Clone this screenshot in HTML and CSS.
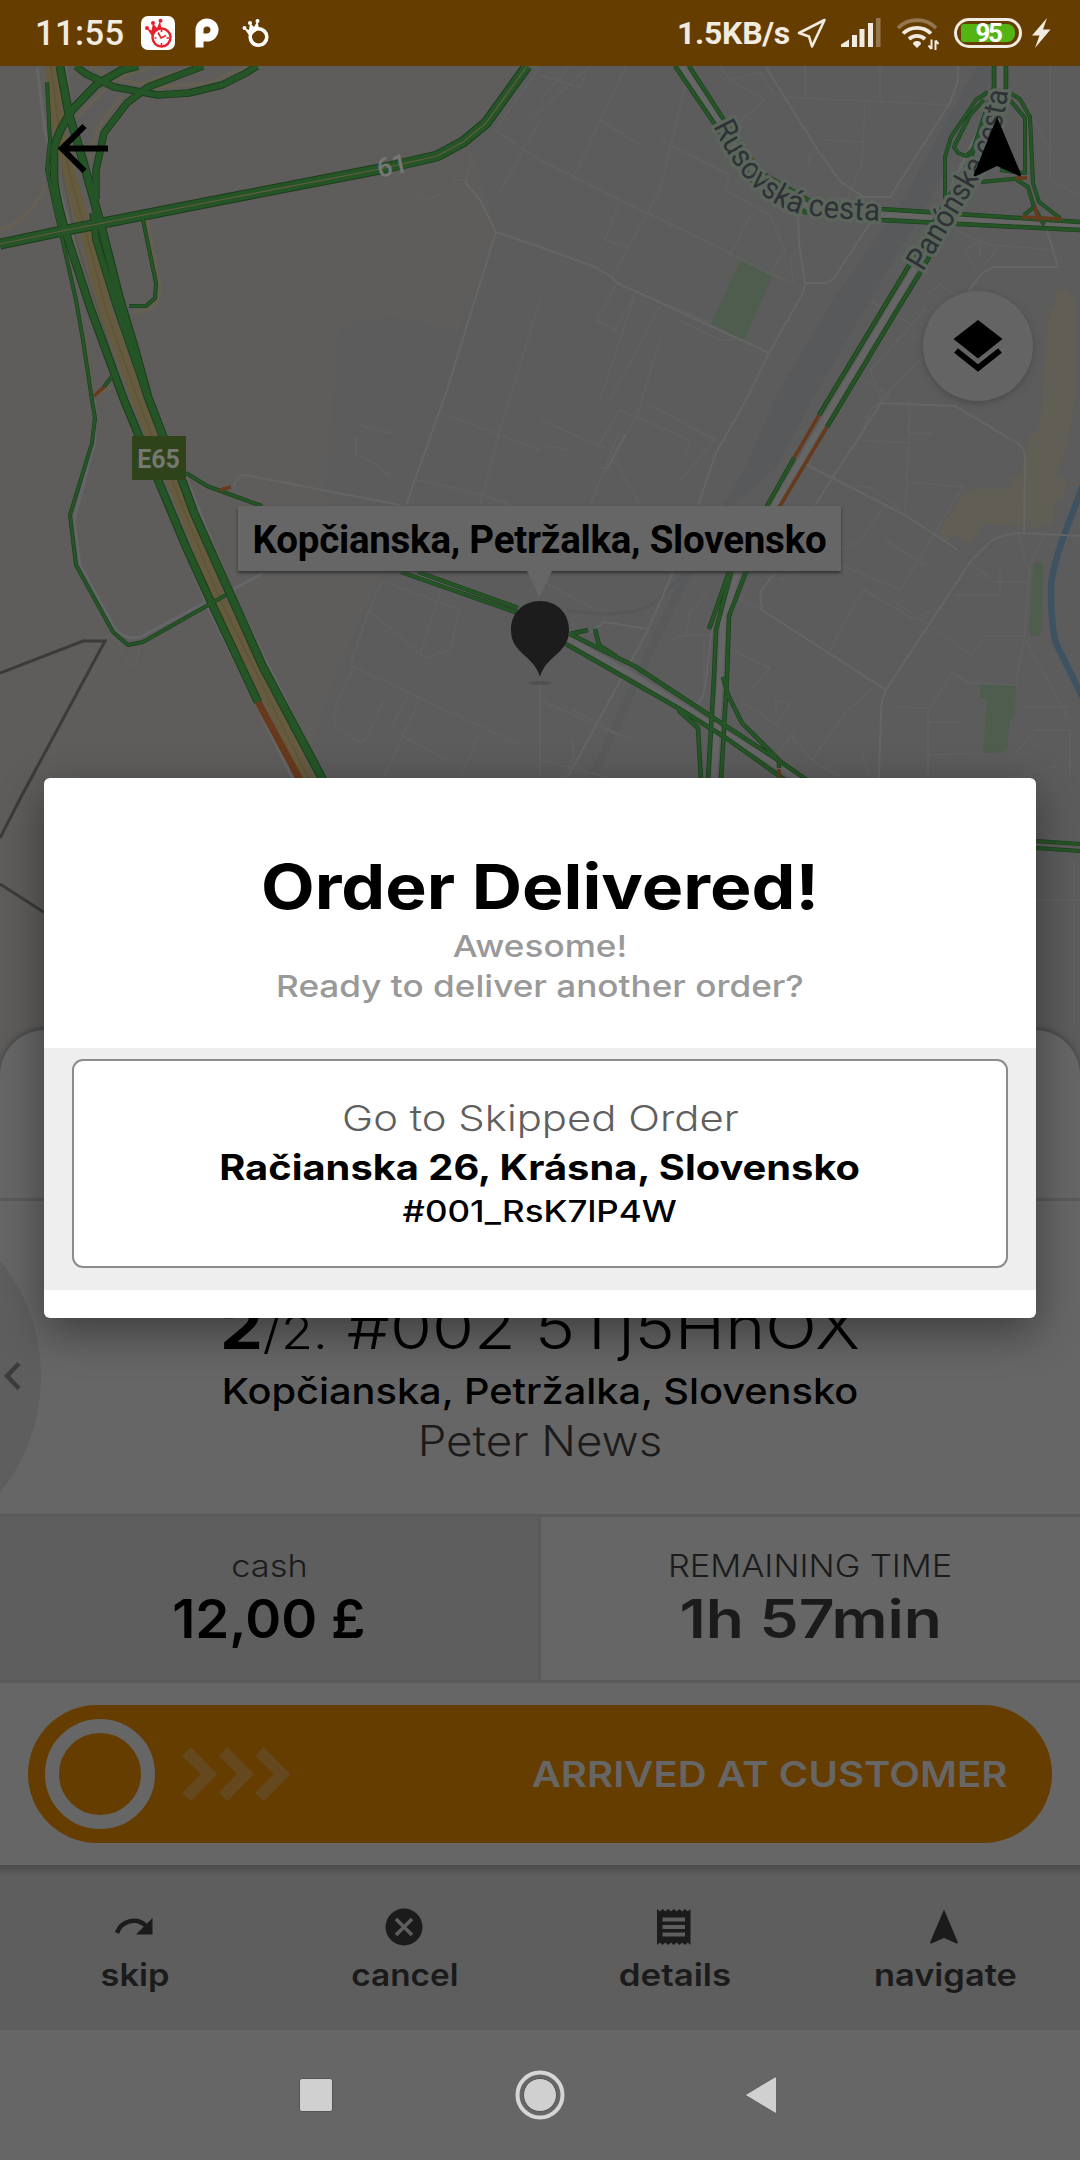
FILE: index.html
```html
<!DOCTYPE html>
<html lang="sk">
<head>
<meta charset="utf-8">
<title>Order Delivered</title>
<link rel="stylesheet" href="styles.css">
</head>
<body>
<div class="screen">
  <header class="status">
    <div class="status-left">
      <span class="clock">11:55</span>
      <svg class="app-icon" width="34" height="34" viewBox="0 0 34 34">
        <rect width="34" height="34" rx="7" fill="#fff"/>
        <g fill="#e8202c"><circle cx="6" cy="12" r="2"/><circle cx="12" cy="7" r="2"/><circle cx="19.500" cy="4.800" r="2"/><path d="M5.500 12l5 2.500 1.500-7 4 4.500 3-7 1.500 8-9.500 7z"/></g>
        <circle cx="20.500" cy="21.500" r="9" fill="#fff" stroke="#e8202c" stroke-width="2.400"/>
        <path d="M17 16.500l3 5.500 5-2.500M20.500 14v2M20.500 27v2.500M13.500 22h2M25.500 22h2.500" fill="none" stroke="#e8202c" stroke-width="1.600"/>
      </svg>
      <svg class="p-icon" width="24" height="30" viewBox="0 0 24 30"><path d="M4.500 29.500V12a7.500 7.500 0 1 1 7.500 7.500H8" fill="none" stroke="#fff" stroke-width="8"/></svg>
      <svg class="ring-icon" width="28" height="30" viewBox="0 0 28 30"><circle cx="16.500" cy="19" r="8.300" fill="none" stroke="#fff" stroke-width="3.600"/><g fill="#fff"><circle cx="2.500" cy="10" r="2"/><circle cx="8" cy="5" r="2"/><circle cx="15.500" cy="3" r="2"/><path d="M2 10l5 2L8 5l4 4 3.500-6 1.500 8-9.500 7z"/></g></svg>
    </div>
    <div class="status-right">
      <span class="speed">1.5KB/s</span>
      <svg class="loc" width="30" height="32" viewBox="0 0 30 32"><path d="M27.500 3L2 16l10 3.500 3 10z" fill="none" stroke="#f2ebe1" stroke-width="2.600" stroke-linejoin="round"/></svg>
      <svg class="signal" width="42" height="30" viewBox="0 0 42 30"><g fill="#f2ebe1"><path d="M1 29v-2.500l8-5V29z"/><rect x="12" y="17" width="5" height="12"/><rect x="19.500" y="11" width="5" height="18"/><rect x="28" y="5" width="5" height="24"/></g><rect x="36" width="4.500" height="29" fill="#94774d"/></svg>
      <svg class="wifi" width="44" height="36" viewBox="0 0 44 36"><g fill="none" stroke-width="3.800"><path d="M2 13a27 27 0 0 1 38 0" stroke="#94774d"/><path d="M7 18.500a20 20 0 0 1 28 0M13 24a12 12 0 0 1 16 0" stroke="#f2ebe1"/></g><path d="M17 29q0-3 4-3t4 3l-4 4z" fill="#f2ebe1"/><path d="M35.500 24.500v9.500m0 0l-3-3.500M39.500 35v-9.500m0 0l3 3.500" fill="none" stroke="#f2ebe1" stroke-width="2"/></svg>
      <span class="battery"><span class="level">95</span></span>
      <svg class="bolt" width="20" height="32" viewBox="0 0 20 32"><path d="M16 1L1 18.500h7.500L4 31 19.500 12.500H12z" fill="#f2ebe1"/></svg>
    </div>
  </header>

  <section class="map">
    <svg class="map-art" width="1080" height="1014" viewBox="0 66 1080 1014">
      <defs>
        <path id="rus" d="M713 126C731 164 757 202 797 213C825 219 850 219 900 222"/>
        <path id="pan" d="M923 272L959 212C974 187 986 168 995 146Q1006 118 1009 80"/>
      </defs>
      <rect y="66" width="1080" height="1014" fill="#5f5d5b"/>
      <path d="M525 66L470 140L497 232L458 333L390 316L340 327L325 493L382 572L339 667L300 778V1080H1080V66z" fill="#5c5c5c"/>
      <path d="M741 260L773 274L744 340L711 323zM980 684H1016L1015 713L1009 723L1008 747L1001 753H983L987 698H980zM1033 566Q1036 558 1043 564L1042 632Q1036 640 1029 634z" fill="#4e5d4e"/>
      <path d="M1056 290Q1070 288 1075 300V400L1068 443L1055 477H1067L1066 490L1061 500H1054V523L1039 528L984 524L971 544L952 534L946 543L937 535L963 493L972 489H1011V477L1020 476L1028 438L1040 427L1043 380L1050 307L1056 305z" fill="#615e55"/>
      <path d="M1084 483L1066 530Q1051 570 1051 590Q1051 625 1056 643L1084 700" fill="none" stroke="#3f5262" stroke-width="6.500"/>
      <path d="M977 66H998L929 200L870 300L812 400L777 467L733 506H723L747 465L774 400L833 300L903 200z" fill="#57595b"/>
      <path d="M730 506L688 572L655 640L592 778" fill="none" stroke="#57595b" stroke-width="8"/>
      <path d="M567 610Q640 622 660 597L685 573" fill="none" stroke="#565859" stroke-width="3"/>

      <g fill="none" stroke="#616161" stroke-width="1.500">
        <path d="M540 160L770 274M540 100L570 66M572 180L626 66M530 120L590 66M612 277L660 190L690 66M711 323L617 283M540 75L580 88L586 74M660 140L730 175L725 190L770 215L785 250L770 274L793 282L790 255M600 120L640 145M571 175L620 200L605 240L628 247"/>
        <path d="M620 200L732 253L750 215M720 66L730 80L765 100L718 140M730 80L760 72L775 95M782 97L950 105M865 103L862 163L848 198L818 200M805 66V95M822 140L863 142M880 66V100M809 165V157L819 152"/>
        <path d="M540 420L610 450L640 505M595 450L620 410L690 440L685 455M620 430L590 505M650 405L715 440L680 480M609 467L625 435M597 467L607 469L637 416L660 340M570 450L540 445M617 283L597 320L615 330L635 295L600 400M680 321L720 340L744 340M660 305L640 345L609 400"/>
        <path d="M908 430V400M905 515L911 400M909 433H932M908 482L963 487L900 590L830 560M863 380L890 395L870 410L860 440L910 443M928 294L940 285L965 300M872 302L912 325L925 308L940 320M912 325L870 370L881 400L930 350L912 335M975 270L965 250L980 240V255M955 230L990 245L1058 250M1000 245L985 265M1050 66V150L1032 118M1050 150V180L1080 195"/>
        <path d="M845 488Q868 483 877 492L900 510M780 580L860 540L885 505M885 540L925 565M861 588L915 620L930 610M892 600L972 655L985 636H1023M763 610L740 600L752 578M733 650L770 668L750 690M826 660L840 630L863 590M952 673L970 683L1016 685M895 707L930 708L952 673M1000 570V595H955M971 562L994 582H1028M1019 535L1028 571M1045 535L1030 565L1024 637L1016 685M1024 637L1068 718M928 780V710M926 755L983 753M928 722H960M1024 707H1068M1015 755L1035 730H1070V778M1008 780L1060 765"/>
        <path d="M573 710L630 740M540 700L618 735M790 735L812 760L845 713L870 690M812 760L862 790M740 700L776 725L790 705L776 700V712M760 780L795 730M870 780L862 750M573 740V760L548 800M540 760L610 778M686 705Q700 705 704 690V640M672 640Q676 636 690 635H710M686 635L690 612L710 590M540 580L597 610"/>
        <path d="M441 413L540 450M500 430L540 300M418 480L482 495L540 515M391 433L360 425M356 436V455L378 465L390 477M480 505L500 430M382 581L460 610L450 650L425 658L369 610L350 665L520 745M382 581L369 610M441 590L420 655M408 695L390 730M420 698L385 775M354 667Q330 710 335 725L358 742Q366 742 368 735L384 700M402 735L446 760M480 733L450 800M540 620V800M495 130L540 160M495 130L540 66M500 192L540 120M412 192Q430 210 455 180Q470 180 465 182L473 162L468 150M100 638Q118 630 125 660Q135 680 140 645"/>
        <path d="M1040 830Q1060 845 1080 843M1036 900H1080M1074 860V1030"/>
      </g>
      <g fill="none" stroke="#656565" stroke-width="2">
        <path d="M540 247L496 232L446 393L406 505M496 232L480 200L465 182M540 247L595 267L612 277L617 283L769 353M765 66L819 152L841 182L864 197H890L950 103L958 80V66M798 213L799 243L805 283L803 293L769 353L747 398L716 453L698 505M804 283H826Q833 280 836 275L870 223"/>
        <path d="M815 505L881 403L955 406L1017 443Q1025 448 1025 458L1024 533M1080 536L1022 533Q1000 534 990 542L970 562L886 690Q881 700 881 713L879 778M776 572L760 592L762 610L886 690M807 465L905 515L958 550M673 572L648 630L567 778M590 633L604 622L648 629M690 710Q704 705 706 680L712 629M1058 267H994L982 273L955 310M1058 267L1050 240L1045 225M400 505L245 475Q240 473 233 487M625 435L607 469"/>
      </g>
      <path d="M232 590L265 572M95 400V440L74 520L80 565L116 630Q125 640 140 637L210 600" fill="none" stroke="#64666a" stroke-width="3"/>

      <g fill="none" stroke="#666052">
        <path d="M0 230Q28 222 46 186M147 220L160 287Q162 312 133 312M90 66L120 80L139 84M155 66L114 80L77 117M124 95Q90 130 90 160M139 84L195 66M152 88L207 83L248 66M64 240L84 340L93 396L112 387" stroke-width="3.500"/>
      </g>
      <g fill="none" stroke-linejoin="round">
        <path d="M51 66L59 130L70 175L86 233L106 310L138 400L152 436L172 480L220 600L250 660L310 782" stroke="#666" stroke-width="31"/>
        <path d="M51 66L59 130L70 175L86 233L106 310L138 400L152 436L172 480L220 600L250 660L310 782" stroke="#5f5d5b" stroke-width="25"/>
        <path d="M51 66L59 130L70 175L86 233L106 310L138 400L152 436L172 480L220 600L250 660L310 782" stroke="#665b3d" stroke-width="12"/>
        <path d="M51 66L59 130L70 175L86 233L106 310L138 400L152 436L172 480L220 600L250 660L310 782M62 170L76 240L120 380" stroke="#5c553f" stroke-width="1.500"/>
      </g>

      <g fill="none" stroke-linejoin="round">
        <g stroke="#666" stroke-width="6">
          <path d="M682 66L718 120Q765 195 806 205L881 214L1080 226M1000 66V90L963 165L914 270L836 400L774 506L738 572L723 622L720 677L714 780M409 572L518 611M568 639L636 677L712 725L800 780"/>
        </g>
        <g stroke="#1b3d1c">
          <path d="M0 244L62 231L220 200L380 169L437 156L463 142L486 123L527 66" stroke-width="11"/>
          <path d="M138 66L122 70L96 85L72 110Q56 135 54 150V175Q54 190 65 230L90 307L124 400L139 436L158 480L186 547L210 600L258 702" stroke-width="8.500"/>
          <path d="M60 66L69 115L79 147L92 193L103 233L120 300L133 343L148 397L163 436L182 480L194 513L227 587L263 667L324 782" stroke-width="9"/>
          <path d="M76 66L86 74L114 87L158 95L189 93L222 85L246 73L257 66M203 66L148 87L127 103L104 133L96 170V199M93 213L96 240L117 308L146 392" stroke-width="7.500"/>
          <path d="M47 82L50 140L47 170L55 207L76 300L83 340L92 400L95 418L92 443L70 515L76 565L113 632L128 645L143 642L210 604L226 595M142 215L156 283L155 298L146 306H129M104 387L113 375M186 473L207 486L262 506" stroke-width="4"/>
          <path d="M675 66L714 123L753 182L805 212L881 220L1080 230M689 66L722 117L760 172L808 200L881 209L1080 222M994 66V87L970 160L908 267L819 415M1006 66V87L985 160L920 273L896 312L827 427M794 458L767 506L729 572L709 629M731 572L716 630L714 677L708 780M780 506L746 572L729 616L727 677L721 780M401 572L518 613M418 572L518 608M570 634L636 667L712 717L781 762L807 780M566 644L678 708L726 738L785 780M570 634L588 630M595 629L599 645L617 657M678 710L698 728L701 780M723 677L728 695L742 723L779 760V768" stroke-width="4.500"/>
          <path d="M988 92L976 100L951 137L945 157V200M984 100L970 115L954 147L958 153L966 156L976 147M1010 93L1020 99L1030 117L1033 183L1039 202L1060 218M1010 100L1025 118V173L1000 170M981 182L1022 178M1017 180L1028 187L1034 207L1024 215M1034 207L1044 225M1036 841L1080 844M1036 848L1080 851" stroke-width="4"/>
        </g>
        <g stroke="#255427">
          <path d="M0 244L62 231L220 200L380 169L437 156L463 142L486 123L527 66" stroke-width="9"/>
          <path d="M138 66L122 70L96 85L72 110Q56 135 54 150V175Q54 190 65 230L90 307L124 400L139 436L158 480L186 547L210 600L258 702" stroke-width="6.500"/>
          <path d="M60 66L69 115L79 147L92 193L103 233L120 300L133 343L148 397L163 436L182 480L194 513L227 587L263 667L324 782" stroke-width="7"/>
          <path d="M76 66L86 74L114 87L158 95L189 93L222 85L246 73L257 66M203 66L148 87L127 103L104 133L96 170V199M93 213L96 240L117 308L146 392" stroke-width="5.800"/>
          <path d="M47 82L50 140L47 170L55 207L76 300L83 340L92 400L95 418L92 443L70 515L76 565L113 632L128 645L143 642L210 604L226 595M142 215L156 283L155 298L146 306H129M104 387L113 375M186 473L207 486L262 506" stroke-width="2.800"/>
          <path d="M675 66L714 123L753 182L805 212L881 220L1080 230M689 66L722 117L760 172L808 200L881 209L1080 222M994 66V87L970 160L908 267L819 415M1006 66V87L985 160L920 273L896 312L827 427M794 458L767 506L729 572L709 629M731 572L716 630L714 677L708 780M780 506L746 572L729 616L727 677L721 780M401 572L518 613M418 572L518 608M570 634L636 667L712 717L781 762L807 780M566 644L678 708L726 738L785 780M570 634L588 630M595 629L599 645L617 657M678 710L698 728L701 780M723 677L728 695L742 723L779 760V768" stroke-width="3.300"/>
          <path d="M988 92L976 100L951 137L945 157V200M984 100L970 115L954 147L958 153L966 156L976 147M1010 93L1020 99L1030 117L1033 183L1039 202L1060 218M1010 100L1025 118V173L1000 170M981 182L1022 178M1017 180L1028 187L1034 207L1024 215M1034 207L1044 225M1036 841L1080 844M1036 848L1080 851" stroke-width="3"/>
        </g>
        <path d="M0 244L62 231L220 200L380 169L437 156L463 142L486 123L527 66" stroke="#665c42" stroke-width="1.200"/>
        <g stroke="#673a1d">
          <path d="M258 702L300 780" stroke-width="7"/>
          <path d="M819 415L794 458M827 427L780 506M779 769V780M94 396L104 387M220 490L231 487M1022 217L1061 219M1035 207L1039 222M1015 178H1027" stroke-width="3.500"/>
        </g>
      </g>
      <path d="M0 673L83 641H105L21 797L0 838M0 884L45 913" fill="none" stroke="#3b3b3a" stroke-width="3"/>

      <rect x="132" y="436" width="54" height="44" fill="#2f431b"/>
      <text class="shield" x="158.500" y="468">E65</text>
      <text class="road-no" transform="translate(379 178) rotate(-12)">61</text>
      <text class="road"><textPath href="#rus" textLength="208" lengthAdjust="spacingAndGlyphs">Rusovská cesta</textPath></text>
      <text class="road"><textPath href="#pan" textLength="202" lengthAdjust="spacingAndGlyphs">Panónska cesta</textPath></text>

      <ellipse cx="540" cy="683" rx="11" ry="2" fill="#505050"/>
      <path d="M540 601C523 601 511 613 511 630C511 654 534 655 540 677C546 655 569 654 569 630C569 613 557 601 540 601z" fill="#1c1c1c"/>
      <path d="M61 148.500H108M84.500 126L62 148.500L84.500 171" fill="none" stroke="#000" stroke-width="6"/>
      <path d="M997 117L1021 174Q1021 177 1019 176L997 166L976 176Q973 177 974 174z"/>
    </svg>
    <div class="callout">Kopčianska, Petržalka, Slovensko</div>
    <div class="layers"><svg width="50" height="54" viewBox="0 0 50 54"><path d="M25 1L49.500 20L25 39.500L.5 20z"/><path d="M3 31.500L25 49L47 31.500" fill="none" stroke="#000" stroke-width="6"/></svg></div>
  </section>

  <main class="sheet">
    <div class="sheet-head"></div>
    <section class="order">
      <h2 class="order-id"><b>2</b><small>/2.</small> <span>#002 5Tj5HhOX</span></h2>
      <p class="address">Kopčianska, Petržalka, Slovensko</p>
      <p class="customer">Peter News</p>
      <div class="prev"><svg width="22" height="30" viewBox="0 0 22 30"><path d="M19 1.500L7 14L19 26.500" fill="none" stroke="#3c3c3c" stroke-width="4.500"/></svg></div>
    </section>
    <section class="stats">
      <div class="stat cash"><span class="label">cash</span><strong>12,00 £</strong></div>
      <div class="stat time"><span class="label">REMAINING TIME</span><strong>1h 57min</strong></div>
    </section>
    <section class="slide-area">
      <div class="slider">
        <span class="knob"></span>
        <svg class="chevrons" width="112" height="54" viewBox="0 0 112 54"><path d="M4.500 4.500L27 27L4.500 50M41 4.500L63.500 27L41 50M77.500 4.500L100 27L77.500 50" fill="none" stroke="#66481f" stroke-width="12"/></svg>
        <span class="slide-text">ARRIVED AT CUSTOMER</span>
      </div>
    </section>
  </main>

  <nav class="tools">
    <div class="tool"><svg width="40" height="40" viewBox="0 0 40 40"><path d="M2 26A17.500 17.500 0 0 1 31 19" fill="none" stroke="#1b1b1b" stroke-width="4.500"/><path d="M37.500 11V27.500H21z" fill="#1b1b1b"/></svg><span class="t-skip">skip</span></div>
    <div class="tool"><svg width="40" height="40" viewBox="0 0 40 40"><circle cx="19" cy="20" r="18.500" fill="#1b1b1b"/><path d="M11 12L27 28M27 12L11 28" stroke="#5e5e5e" stroke-width="3.600"/></svg><span class="t-cancel">cancel</span></div>
    <div class="tool"><svg width="40" height="40" viewBox="0 0 40 40"><path d="M2 2l2.800 2.500L7.600 2l2.800 2.500L13.200 2 16 4.500 18.800 2l2.800 2.500L24.400 2l2.800 2.500L30 2l2.800 2.500L35.500 2v36l-2.700-2.500L30 38l-2.800-2.500-2.800 2.500-2.800-2.500-2.800 2.500-2.800-2.500-2.800 2.500-2.800-2.500L7.600 38l-2.800-2.500L2 38z" fill="#1b1b1b"/><path d="M7.500 12.500h22.500M7.500 20h22.500M7.500 27.500h22.500" stroke="#5e5e5e" stroke-width="3.800"/></svg><span class="t-details">details</span></div>
    <div class="tool"><svg width="40" height="40" viewBox="0 0 40 40"><path d="M19 2.500L32.800 35Q33 37 31.500 36.500L19 31L6.500 36.500Q5 37 5.200 35z" fill="#1b1b1b"/></svg><span class="t-navigate">navigate</span></div>
  </nav>

  <footer class="sysnav">
    <svg width="56" height="56" viewBox="0 0 56 56"><rect x="11.500" y="11.500" width="33" height="33" rx="2.500" fill="#d0d0d0" stroke="#555"/></svg>
    <svg width="56" height="56" viewBox="0 0 56 56"><circle cx="28" cy="28" r="16.500" fill="#d0d0d0" stroke="#555"/><circle cx="28" cy="28" r="22.500" fill="none" stroke="#d6d6d6" stroke-width="4"/></svg>
    <svg width="56" height="56" viewBox="0 0 56 56"><path d="M9 28L39 10Q40.500 9.500 40.500 11V45.500Q40.500 47 39 46z" fill="#d0d0d0" stroke="#555" stroke-width=".8" stroke-linejoin="round"/></svg>
  </footer>

  <div class="dialog" role="dialog">
    <div class="dialog-head">
      <h1>Order Delivered!</h1>
      <p class="awesome">Awesome!</p>
      <p class="ready">Ready to deliver another order?</p>
    </div>
    <div class="dialog-body">
      <div class="skipped">
        <span class="goto">Go to Skipped Order</span>
        <strong class="place">Račianska 26, Krásna, Slovensko</strong>
        <span class="code">#001_RsK7lP4W</span>
      </div>
    </div>
  </div>
</div>
</body>
</html>
```
FILE: styles.css
```css
* { box-sizing: border-box; }
body { margin: 0; font-family: Inter, "Liberation Sans", sans-serif; background: #666; }
h1, h2, p { margin: 0; font-weight: inherit; }
svg { display: block; flex: none; }
.screen { position: relative; width: 1080px; height: 2160px; display: flex; flex-direction: column; overflow: hidden; background: #666; }

.status { height: 66px; flex: none; background: #663d00; color: #f2ebe1; display: flex; justify-content: space-between; align-items: center; padding: 0 29px 0 35px; font-family: Roboto, sans-serif; font-weight: 500; }
.status-left, .status-right { display: flex; align-items: center; }
.clock { font-size: 34.500px; width: 106px; letter-spacing: .4px; line-height: 68px; }
.p-icon { margin-left: 20px; }
.ring-icon { margin-left: 23px; }
.speed { font-size: 32px; font-weight: 700; width: 120px; line-height: 68px; white-space: nowrap; letter-spacing: -.3px; }
.signal { margin-left: 13px; }
.wifi { margin-left: 14px; }
.battery { width: 68px; height: 30px; margin-left: 14px; border: 3px solid #f2ebe1; border-radius: 15px; padding: 3px 4px; }
.level { display: block; height: 18px; border-radius: 3px 8px 8px 3px; background: #54b414; color: #fff; font-size: 26px; font-weight: 700; line-height: 19px; text-align: center; letter-spacing: -2.500px; }
.bolt { margin-left: 9px; }

.map { position: relative; height: 1014px; flex: none; }
.shield { font: 700 25px Roboto, sans-serif; fill: #757870; text-anchor: middle; }
.road-no { font: 500 27px Roboto, sans-serif; fill: #767676; }
.road { font: 400 31px Roboto, sans-serif; fill: #2e3236; stroke: #5b655c; stroke-width: 7px; paint-order: stroke; stroke-linejoin: round; }
.callout { position: absolute; left: 238px; top: 440px; width: 603px; height: 65px; background: #666; box-shadow: 0 2px 3px #333; text-align: center; font: 700 38.500px/67px Roboto, sans-serif; letter-spacing: -.25px; color: #000; white-space: nowrap; }
.callout::after { content: ""; position: absolute; left: 289px; top: 65px; width: 25px; height: 26px; background: #666; clip-path: polygon(0 0, 100% 0, 50% 100%); }
.layers { position: absolute; left: 923px; top: 225px; width: 110px; height: 110px; border-radius: 50%; background: #646464; box-shadow: 0 2px 7px #4a4a4a; display: flex; align-items: center; justify-content: center; }

.sheet { position: relative; margin-top: -50px; height: 835px; flex: none; background: #666; border-radius: 45px 45px 0 0; box-shadow: 0 -2px 5px #444; text-align: center; }
.sheet-head { height: 171px; border-bottom: 3px solid #5a5a5a; }
.order { position: relative; height: 313px; padding-top: 87px; overflow: hidden; color: #000; white-space: nowrap; }
.order-id { font-size: 60px; font-weight: 300; line-height: 78px; height: 78px; transform: scaleX(1.134); }
.order-id b { font-weight: 700; }
.order-id small { font-size: 46px; }
.address { font-size: 36px; font-weight: 500; line-height: 50px; transform: scaleX(1.104); }
.customer { font-size: 42px; font-weight: 300; line-height: 50px; color: #1b1b1b; transform: scaleX(1.086); }
.prev { position: absolute; left: -328px; top: -9px; width: 369px; height: 369px; border-radius: 50%; background: #5e5e5e; display: flex; align-items: center; justify-content: flex-end; padding-right: 19px; }
.stats { display: flex; height: 169px; border-top: 3px solid #5a5a5a; border-bottom: 3px solid #5a5a5a; }
.stat { display: flex; flex-direction: column; align-items: center; padding-top: 28.500px; white-space: nowrap; }
.cash { width: 541px; background: #5e5e5e; border-right: 3px solid #5a5a5a; color: #000; }
.time { width: 539px; color: #1b1b1b; }
.label { font-size: 31px; font-weight: 300; line-height: 40px; color: #1b1b1b; transform: scaleX(1.11); }
.stat strong { font-size: 53px; font-weight: 600; line-height: 66px; }
.cash strong { transform: scaleX(1.03); }
.time strong { transform: scaleX(1.175); }
.slide-area { padding: 22px 28px; }
.slider { height: 138px; border-radius: 69px; background: #663d00; display: flex; align-items: center; padding: 0 45px 0 17px; }
.knob { width: 110px; height: 110px; border: 14px solid #666; border-radius: 50%; flex: none; }
.chevrons { margin-left: 27px; }
.slide-text { margin-left: auto; font-size: 36px; font-weight: 600; color: #666; white-space: nowrap; transform: scaleX(1.113); transform-origin: right; }

.tools { position: relative; height: 165px; flex: none; background: linear-gradient(#4a4a4a, #5e5e5e 10px); display: grid; grid-template-columns: repeat(4, 270px); color: #1b1b1b; font-size: 31px; font-weight: 600; }
.tool { display: flex; flex-direction: column; align-items: center; padding-top: 42px; gap: 8px; line-height: 40px; }
.t-skip, .t-navigate { transform: scaleX(1.11); }
.t-cancel { transform: scaleX(1.075); }
.t-details { transform: scaleX(1.125); }
.sysnav { height: 130px; flex: none; display: flex; justify-content: center; align-items: center; gap: 168px; background: #666; }

.dialog { position: absolute; left: 44px; top: 778px; width: 992px; height: 540px; border-radius: 6px; background: #fff; box-shadow: 0 14px 44px rgba(0, 0, 0, .4); text-align: center; white-space: nowrap; }
.dialog-head { height: 270px; padding-top: 70px; }
.dialog h1 { font-size: 62px; font-weight: 700; line-height: 78px; color: #000; transform: scaleX(1.124); }
.dialog-head p { font-size: 30.500px; font-weight: 500; line-height: 40px; color: #999; transform: scaleX(1.152); }
.dialog-body { height: 242px; padding: 11px 28px 0 28px; background: #eee; }
.skipped { height: 209px; border: 2px solid #8c8c8c; border-radius: 11px; background: #fff; display: flex; flex-direction: column; align-items: center; padding-top: 34px; color: #000; }
.goto { font-size: 35.500px; font-weight: 300; line-height: 48px; color: #5f5f5f; transform: scaleX(1.178); }
.place { font-size: 35px; font-weight: 700; line-height: 48px; transform: scaleX(1.138); }
.code { font-size: 30px; font-weight: 500; line-height: 40px; transform: scaleX(1.165); }
```
